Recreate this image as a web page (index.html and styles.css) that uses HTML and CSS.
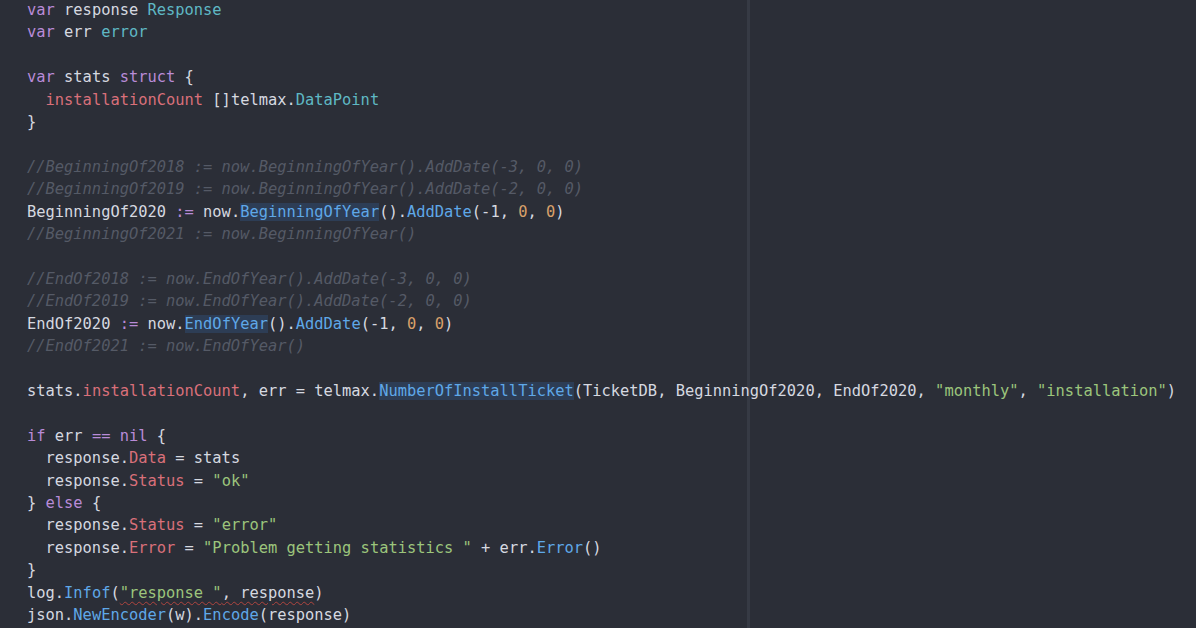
FILE: index.html
```html
<!DOCTYPE html>
<html>
<head>
<meta charset="utf-8">
<link rel="stylesheet" href="styles.css">
</head>
<body>
<div class="editor">
<pre class="code"><span class="kw">var</span> response <span class="ty">Response</span>
<span class="kw">var</span> err <span class="ty">error</span>

<span class="kw">var</span> stats <span class="kw">struct</span> {
  <span class="fd">installationCount</span> []telmax.<span class="ty">DataPoint</span>
}

<span class="cm">//BeginningOf2018 := now.BeginningOfYear().AddDate(-3, 0, 0)</span>
<span class="cm">//BeginningOf2019 := now.BeginningOfYear().AddDate(-2, 0, 0)</span>
BeginningOf2020 <span class="kw">:=</span> now.<span class="fn hl">BeginningOfYear</span>().<span class="fn">AddDate</span>(-1, <span class="nm">0</span>, <span class="nm">0</span>)
<span class="cm">//BeginningOf2021 := now.BeginningOfYear()</span>

<span class="cm">//EndOf2018 := now.EndOfYear().AddDate(-3, 0, 0)</span>
<span class="cm">//EndOf2019 := now.EndOfYear().AddDate(-2, 0, 0)</span>
EndOf2020 <span class="kw">:=</span> now.<span class="fn hl">EndOfYear</span>().<span class="fn">AddDate</span>(-1, <span class="nm">0</span>, <span class="nm">0</span>)
<span class="cm">//EndOf2021 := now.EndOfYear()</span>

stats.<span class="fd">installationCount</span>, err = telmax.<span class="fn hl">NumberOfInstallTicket</span>(TicketDB, BeginningOf2020, EndOf2020, <span class="st">"monthly"</span>, <span class="st">"installation"</span>)

<span class="kw">if</span> err <span class="kw">==</span> <span class="kw">nil</span> {
  response.<span class="fd">Data</span> = stats
  response.<span class="fd">Status</span> = <span class="st">"ok"</span>
} <span class="kw">else</span> {
  response.<span class="fd">Status</span> = <span class="st">"error"</span>
  response.<span class="fd">Error</span> = <span class="st">"Problem getting statistics "</span> + err.<span class="fn">Error</span>()
}
log.<span class="fn">Infof</span>(<span class="sq"><span class="st">"response "</span>, response</span>)
json.<span class="fn">NewEncoder</span>(w).<span class="fn">Encode</span>(response)</pre>
</div>
</body>
</html>
```
FILE: styles.css
```css
html, body {
  margin: 0;
  padding: 0;
  background: #2b2e37;
  height: 100%;
  overflow: hidden;
}

.editor {
  height: 628px;
  background-color: #2b2e37;
  background-image: linear-gradient(to right, transparent 747px, #363a44 747px, #363a44 750px, transparent 750px);
}

.code {
  margin: 0;
  padding: 0 0 0 27px;
  position: relative;
  top: -1px;
  font-family: "DejaVu Sans Mono", "Liberation Mono", monospace;
  font-size: 15.4px;
  line-height: 22.4px;
  color: #d6d9e0;
  white-space: pre;
}

.kw { color: #b98bd8; }
.ty { color: #5fb8c4; }
.fd { color: #d9707a; }
.fn { color: #5fa8e8; }
.hl { background: #2d3d55; }
.nm { color: #d8a06a; }
.st { color: #9cc57c; }
.cm { color: #555a66; font-style: italic; }
.sq {
  text-decoration: underline wavy #b0453f;
  text-decoration-thickness: 1px;
  text-underline-offset: 3px;
}
```
